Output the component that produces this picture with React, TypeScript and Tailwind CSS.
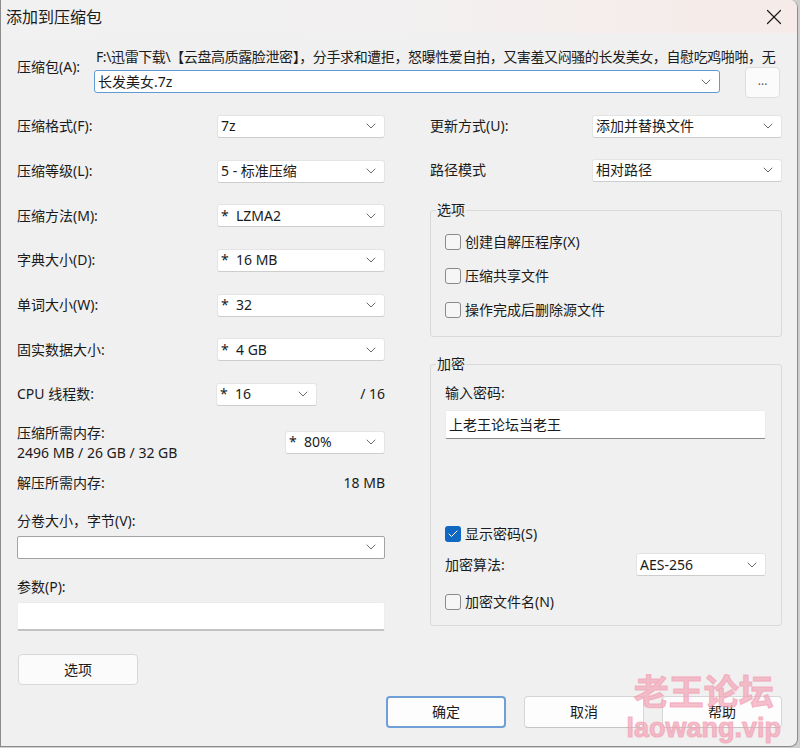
import { Check, ChevronDown, X } from 'lucide-react';

const pathText =
  'F:\\迅雷下载\\【云盘高质露脸泄密】，分手求和遭拒，怒曝性爱自拍，又害羞又闷骚的长发美女，自慰吃鸡啪啪，无';

function Select({ value, className }: { value: string; className?: string }) {
  return (
    <div
      className={`flex h-[23px] items-center justify-between rounded-[3px] border border-[#e4e4e4] border-b-[#cdcdcd] bg-white pl-[3px] pr-[5px] ${className ?? ''}`}
    >
      <span className="whitespace-pre leading-[20px]">{value}</span>
      <ChevronDown size={16} strokeWidth={1.4} className="text-[#5f5f5f]" />
    </div>
  );
}

function Row({ label, children }: { label: string; children: React.ReactNode }) {
  return (
    <div className="flex h-[44.7px] items-center justify-between">
      <span className="leading-[20px]">{label}</span>
      {children}
    </div>
  );
}

function CheckBox({ label, checked }: { label: string; checked?: boolean }) {
  return (
    <div className="flex h-[34px] items-center gap-[4px]">
      {checked ? (
        <span className="flex h-[16px] w-[16px] items-center justify-center rounded-[3px] bg-[#1068c2]">
          <Check size={12} strokeWidth={2} className="text-white" />
        </span>
      ) : (
        <span className="h-[16px] w-[16px] rounded-[3px] border border-[#8a8a8a] bg-[#f6f6f6]" />
      )}
      <span className="leading-[20px]">{label}</span>
    </div>
  );
}

function Button({ label, primary }: { label: string; primary?: boolean }) {
  return (
    <button
      className={`flex h-[32px] w-[120px] items-center justify-center rounded-[4px] bg-[#fdfdfd] ${
        primary ? 'border-2 border-[#6f9fd6]' : 'border border-[#d6d6d6] border-b-[#c4c4c4]'
      }`}
    >
      {label}
    </button>
  );
}

export default function App() {
  return (
    <div className="h-[748px] w-[800px] bg-[#cfcfcf] font-['Noto_Sans','Noto_Sans_CJK_SC',sans-serif] text-[14px] text-[#1b1b1b]">
      <div className="relative flex h-[747px] w-[798px] flex-col overflow-hidden rounded-tr-[8px] rounded-br-[8px] border border-t-0 border-[#8c8c8c] bg-[#f0f0f0]">
        {/* title bar */}
        <div className="flex h-[33px] items-center justify-between bg-gradient-to-r from-[#f1f1f1] via-[#f2f0f0] to-[#f6ebe8] pl-[5px] pr-[10px]">
          <span className="text-[16px] leading-[22px]">添加到压缩包</span>
          <X size={26} strokeWidth={1.1} className="text-[#1b1b1b]" />
        </div>

        {/* archive path */}
        <div className="mt-[14px] flex pl-[16px] pr-[17px]">
          <span className="w-[77px] pt-[10px] leading-[20px]">压缩包(A):</span>
          <div className="flex min-w-0 flex-1 flex-col">
            <div className="overflow-hidden whitespace-nowrap pl-[2px] leading-[20px] tracking-[-0.4px]">
              {pathText}
            </div>
            <div className="flex items-start">
              <div className="mt-[3px] flex h-[23px] w-[628px] items-center justify-between rounded-[3px] border border-[#5f9ad8] bg-white pl-[3px] pr-[5px]">
                <span className="leading-[20px]">长发美女.7z</span>
                <ChevronDown size={16} strokeWidth={1.4} className="text-[#5f5f5f]" />
              </div>
              <div className="ml-[25px] flex h-[31px] w-[35px] items-center justify-center rounded-[4px] border border-[#dedede] bg-[#fbfbfb] pb-[4px] text-[12px] text-[#555]">
                ...
              </div>
            </div>
          </div>
        </div>

        {/* two columns */}
        <div className="mt-[6px] flex justify-between pl-[16px] pr-[15px]">
          {/* left */}
          <div className="flex w-[368px] flex-col">
            <Row label="压缩格式(F):">
              <Select value="7z" className="w-[168px]" />
            </Row>
            <Row label="压缩等级(L):">
              <Select value="5 - 标准压缩" className="w-[168px]" />
            </Row>
            <Row label="压缩方法(M):">
              <Select value="*  LZMA2" className="w-[168px]" />
            </Row>
            <Row label="字典大小(D):">
              <Select value="*  16 MB" className="w-[168px]" />
            </Row>
            <Row label="单词大小(W):">
              <Select value="*  32" className="w-[168px]" />
            </Row>
            <Row label="固实数据大小:">
              <Select value="*  4 GB" className="w-[168px]" />
            </Row>
            <div className="flex h-[44.7px] items-center">
              <span className="w-[199px] leading-[20px]">CPU 线程数:</span>
              <Select value="*  16" className="w-[101px]" />
              <span className="ml-auto leading-[20px]">/ 16</span>
            </div>

            <div className="mt-[6px] flex items-start justify-between">
              <div className="flex flex-col leading-[20px]">
                <span>压缩所需内存:</span>
                <span>2496 MB / 26 GB / 32 GB</span>
              </div>
              <Select value="*  80%" className="mt-[8px] w-[100px]" />
            </div>

            <div className="mt-[10px] flex justify-between leading-[20px]">
              <span>解压所需内存:</span>
              <span>18 MB</span>
            </div>

            <span className="mt-[18px] leading-[20px]">分卷大小，字节(V):</span>
            <div className="mt-[5px] flex h-[23px] items-center justify-end rounded-[2px] border border-[#a3a3a3] bg-white pr-[5px]">
              <ChevronDown size={16} strokeWidth={1.4} className="text-[#5f5f5f]" />
            </div>

            <span className="mt-[18px] leading-[20px]">参数(P):</span>
            <div className="mt-[5px] h-[29px] rounded-[2px] border border-[#ececec] border-b-2 border-b-[#c2c2c2] bg-white" />

            <div className="ml-[1px] mt-[23px]">
              <button className="flex h-[31px] w-[120px] items-center justify-center rounded-[4px] border border-[#d8d8d8] bg-[#fbfbfb]">
                选项
              </button>
            </div>
          </div>

          {/* right */}
          <div className="flex w-[352px] flex-col">
            <div className="flex h-[44px] items-center justify-between">
              <span className="leading-[20px]">更新方式(U):</span>
              <Select value="添加并替换文件" className="w-[190px]" />
            </div>
            <div className="flex h-[44px] items-center justify-between">
              <span className="leading-[20px]">路径模式</span>
              <Select value="相对路径" className="w-[190px]" />
            </div>

            <fieldset className="mt-[8px] rounded-[3px] border border-[#d9d9d9] pb-[9px] pl-[14px] pr-[14px] pt-[5px]">
              <legend className="-ml-[9px] px-[1px] leading-[20px]">选项</legend>
              <CheckBox label="创建自解压程序(X)" />
              <CheckBox label="压缩共享文件" />
              <CheckBox label="操作完成后删除源文件" />
            </fieldset>

            <fieldset className="mt-[17px] flex flex-col rounded-[3px] border border-[#d9d9d9] pb-[6px] pl-[14px] pr-[15px] pt-[9px]">
              <legend className="-ml-[9px] px-[1px] leading-[20px]">加密</legend>
              <span className="leading-[20px]">输入密码:</span>
              <div className="mt-[7px] flex h-[29px] items-center rounded-[2px] border border-[#ececec] border-b-[#8a8a8a] bg-white pl-[3px]">
                <span className="leading-[20px]">上老王论坛当老王</span>
              </div>
              <div className="mt-[78px]">
                <CheckBox label="显示密码(S)" checked />
              </div>
              <div className="mt-[2px] flex items-center justify-between">
                <span className="leading-[20px]">加密算法:</span>
                <Select value="AES-256" className="w-[130px]" />
              </div>
              <div className="mt-[9px]">
                <CheckBox label="加密文件名(N)" />
              </div>
            </fieldset>
          </div>
        </div>

        {/* bottom buttons */}
        <div className="mt-[11px] flex justify-end gap-[18px] pr-[15px]">
          <Button label="确定" primary />
          <Button label="取消" />
          <Button label="帮助" />
        </div>

        {/* watermark */}
        <div className="pointer-events-none absolute bottom-[3px] right-[16px] flex flex-col items-center font-['Liberation_Sans','Noto_Sans_CJK_SC',sans-serif] font-bold text-[#f2a3b6]/70 [-webkit-text-stroke:1.2px_rgba(242,163,182,0.7)]">
          <span className="text-[35px] leading-[40px]">老王论坛</span>
          <span className="text-[27px] leading-[30px]">laowang.vip</span>
        </div>
      </div>
    </div>
  );
}
